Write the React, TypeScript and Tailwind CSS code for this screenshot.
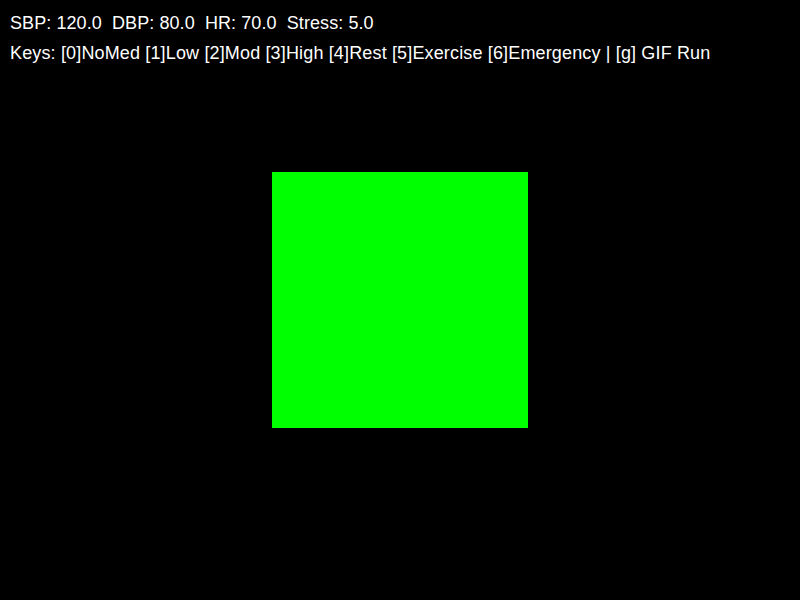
export default function App() {
  const vitals = { sbp: 120, dbp: 80, hr: 70, stress: 5 };

  return (
    <div className="h-[600px] w-[800px] overflow-hidden bg-black font-['Liberation_Sans',Arial,sans-serif] text-white">
      <div className="whitespace-pre px-[10px] pt-2 text-[18px] leading-[30px]">
        <p className="tracking-[0.08px]">
          {`SBP: ${vitals.sbp.toFixed(1)}  DBP: ${vitals.dbp.toFixed(1)}  HR: ${vitals.hr.toFixed(1)}  Stress: ${vitals.stress.toFixed(1)}`}
        </p>
        <p className="tracking-[0.15px]">
          Keys: [0]NoMed [1]Low [2]Mod [3]High [4]Rest [5]Exercise [6]Emergency | [g] GIF Run
        </p>
      </div>
      <div className="mx-auto mt-[104px] h-64 w-64 bg-[#00ff00]" />
    </div>
  );
}
